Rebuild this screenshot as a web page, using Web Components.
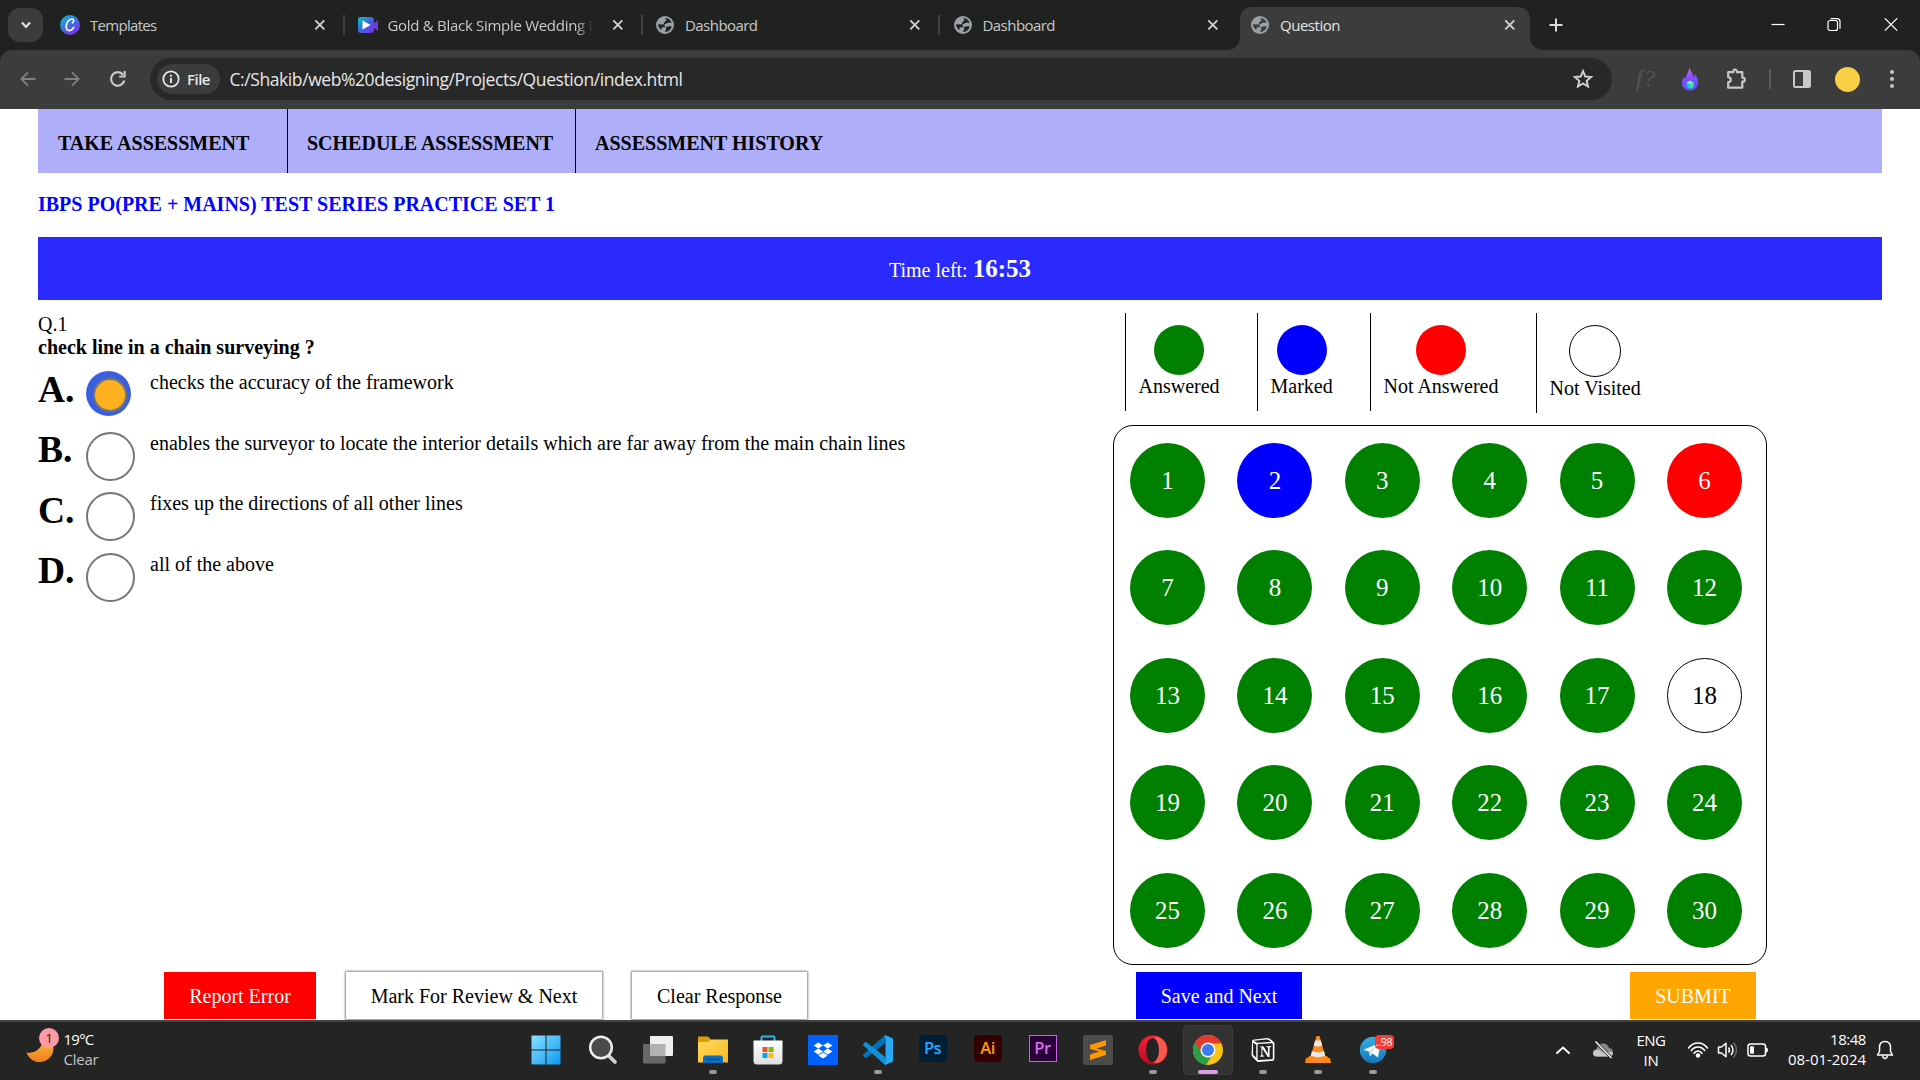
<!DOCTYPE html>
<html lang="en">
<head>
<meta charset="utf-8">
<title>Question</title>
<style>
html,body{margin:0;padding:0;width:1920px;height:1080px;overflow:hidden;background:#fff}
</style>
</head>
<body>
<question-screen></question-screen>
<script>
const define = (name, css, html, setup) => {
  const tpl = document.createElement('template');
  tpl.innerHTML = `<style>*,::before{box-sizing:border-box}:host{display:block;box-sizing:border-box}${css}</style>${html}`;
  customElements.define(name, class extends HTMLElement {
    connectedCallback() {
      if (this.shadowRoot) return;
      const root = this.attachShadow({ mode: 'open' });
      root.appendChild(tpl.content.cloneNode(true));
      if (setup) setup(this, root);
    }
  });
};

/* name: [width, height, markup] */
const ICONS = {
  down: [14, 14, '<path d="M3 4.500l4 4.400 4-4.400" fill="none" stroke="#e3e3e3" stroke-width="2.200"/>'],
  close: [12, 12, '<path d="M1.3 1.3l9 9M10.3 1.3l-9 9" stroke="#d0d0d0" stroke-width="1.9"/>'],
  canva: [20, 20, '<defs><linearGradient id="g" x1="0" y1="0" x2=".7" y2="1"><stop offset="0" stop-color="#00c4cc"/><stop offset=".5" stop-color="#3a78dc"/><stop offset="1" stop-color="#7d2ae8"/></linearGradient></defs><circle cx="10" cy="10" r="10" fill="url(#g)"/><path d="M12.500 7.800c1.500-.8 1.700-3.800-.4-3.800C8.800 4 6 8 6.200 11.800c.1 2.600 1.500 3.900 3.300 3.800 1.700-.1 3.100-1.200 4.200-3.200" fill="none" stroke="#fff" stroke-width="1.600" stroke-linecap="round"/>'],
  video: [20, 18, '<defs><linearGradient id="g" x1="0" y1="0" x2="1" y2="1"><stop offset="0" stop-color="#00c4cc"/><stop offset=".5" stop-color="#4066e0"/><stop offset="1" stop-color="#7d2ae8"/></linearGradient></defs><rect x="0" y="1" width="16" height="16" rx="3" fill="url(#g)"/><path d="M15 8l5-4v11l-5-4z" fill="#6a3be4"/><path d="M4.500 4.500v9l8-4.500z" fill="#fff"/>'],
  globe: [18, 18, '<circle cx="9" cy="9" r="9" fill="#9aa0a6"/><path d="M8.500 2C11 3 11 4.500 9 5.500 7.500 6.200 9 7.700 7 8.500L2 8.300c.1 2.500 1.500 4.500 3.500 5.700V11.500l4-.5c-1-1.500-2-2 0-3 2-.8 2.500-2.500 6-1C15 4 12 1.800 8.500 2zM9.500 11.500c1.500-1 4.500-1.500 6.300-1.200C15 13.500 12.500 15.800 9.500 16c-1-1.500 2-2.500 0-4.500z" fill="var(--hole,#202221)"/>'],
  plus: [14, 14, '<path d="M7 .5v13M.5 7h13" stroke="#dadada" stroke-width="2"/>'],
  min: [14, 14, '<path d="M.5 6.500h13" stroke="#fff" stroke-width="1.200"/>'],
  restore: [14, 14, '<rect x="1" y="2.500" width="9.500" height="10" rx="2" fill="none" stroke="#fff" stroke-width="1.200"/><path d="M3.500.7h6.500q3 0 3 3v7" fill="none" stroke="#fff" stroke-width="1.200"/>'],
  x: [14, 14, '<path d="M.8.3l12.400 12.400M13.200.3L.8 12.700" stroke="#fff" stroke-width="1.200"/>'],
  back: [16, 16, '<path d="M15.500 8H1.500M8 1.300L1.300 8 8 14.700" fill="none" stroke="#808080" stroke-width="1.900"/>'],
  fwd: [16, 16, '<path d="M.5 8h14M8 1.300L14.700 8 8 14.700" fill="none" stroke="#808080" stroke-width="1.900"/>'],
  reload: [18, 18, '<path d="M15.300 10.500A6.700 6.700 0 1 1 14 4.700" fill="none" stroke="#c9c9c9" stroke-width="2.200"/><path d="M16.700 1v6.500h-6.500V5.500h4.300V1z" fill="#c9c9c9"/>'],
  info: [18, 18, '<circle cx="9" cy="9" r="7.700" fill="none" stroke="#e6e6e6" stroke-width="1.800"/><path d="M9 8v5M9 4.800v2" stroke="#e6e6e6" stroke-width="1.900"/>'],
  star: [22, 22, '<path d="M11 3.200l2.300 5.300 5.800.5-4.400 3.800 1.300 5.700-5-3-5 3 1.300-5.700L2.900 9l5.800-.5z" fill="none" stroke="#cfcfcf" stroke-width="2"/>'],
  flame: [18, 24, '<defs><linearGradient id="g" x1="0" y1="0" x2=".2" y2="1"><stop offset="0" stop-color="#e36bfb"/><stop offset=".5" stop-color="#8a4dff"/><stop offset="1" stop-color="#5a50ff"/></linearGradient></defs><path d="M8.500.5c.6 3.800 3.500 5.700 4.100 9.700.9-.8 1.200-2 1.200-3.300 2.200 2.500 3.300 5.600 3.100 8.800-.2 4.500-3.400 7.800-8 7.800S.8 20.300.9 16c.1-3 1.300-4.500 2-6.500.4 1.200.7 2 1.300 2.500C5 8.500 7.700 5.500 8.500.5z" fill="url(#g)"/><path d="M9 13.500l3.500 2v4.500l-3.500 2-3.500-2v-4.500z" fill="#22bdf0"/><path d="M9 13.500l3.500 2-3.500 2-3.500-2z" fill="#6ff2b0"/><path d="M9 17.500l3.500-2v4.500l-3.500 2z" fill="#3be0a0"/>'],
  puzzle: [22, 22, '<path d="M3.200 4.200h5q-.3-2.500 1.800-2.500t1.800 2.500h5.500v5.500q2.500-.2 2.500 2t-2.500 2v6H3.200v-5.500q2.600-.3 2.600-2.500t-2.600-2.500z" fill="none" stroke="#c8c8c8" stroke-width="2.200" stroke-linejoin="round"/>'],
  panel: [20, 20, '<rect x="2" y="2" width="16" height="16" rx="1.500" fill="none" stroke="#c8c8c8" stroke-width="2"/><rect x="11" y="2" width="7" height="16" fill="#c8c8c8"/>'],
  dots: [6, 20, '<circle cx="3" cy="3" r="2" fill="#c8c8c8"/><circle cx="3" cy="10" r="2" fill="#c8c8c8"/><circle cx="3" cy="17" r="2" fill="#c8c8c8"/>'],
  moon: [28, 22, '<defs><linearGradient id="g" x1="0" y1="0" x2="0" y2="1"><stop offset="0" stop-color="#f9b93a"/><stop offset="1" stop-color="#f07c1d"/></linearGradient></defs><path d="M.5 11.500Q12 13.500 17 1L26 0Q30 11 23 17.500 17 22.500 9 20.500 3 18 .5 11.500z" fill="url(#g)"/>'],
  win: [30, 30, '<defs><linearGradient id="g" gradientUnits="userSpaceOnUse" x1="0" y1="0" x2="30" y2="30"><stop offset="0" stop-color="#8be2ff"/><stop offset="1" stop-color="#0a97f5"/></linearGradient></defs><path d="M.5.5h14v14h-14zM15.500.5h14v14h-14zM.5 15.500h14v14h-14zM15.500 15.500h14v14h-14z" fill="url(#g)"/>'],
  search: [30, 30, '<path d="M20 20l7 7" stroke="#cfd3d8" stroke-width="3.800" stroke-linecap="round"/><circle cx="13" cy="12.500" r="10.800" fill="#4b4b4d" stroke="#ececec" stroke-width="2.500"/>'],
  tasks: [30, 30, '<rect x="0" y="9" width="22.500" height="19.500" rx="1" fill="#686868"/><rect x="7" y="1" width="23" height="20" rx="1" fill="#efefef"/><path d="M7 9h15.500v12H8q-1 0-1-1z" fill="#b2b2b2"/>'],
  folder: [30, 30, '<defs><linearGradient id="g" x1="0" y1="0" x2="1" y2="1"><stop offset="0" stop-color="#ffd95e"/><stop offset="1" stop-color="#f9b920"/></linearGradient></defs><path d="M0 2.500Q0 1.500 1 1.500h9l3 3v6H0z" fill="#e19c05"/><path d="M0 7h10l3-2.500h17v23H0z" fill="url(#g)"/><path d="M5 28v-5q0-2.500 2.500-2.500h15q2.500 0 2.500 2.500v5z" fill="#0f6cbd"/><path d="M8 24.300h14" stroke="#0a4c87" stroke-width="1.200"/>'],
  store: [30, 30, '<defs><linearGradient id="g" x1="0" y1="0" x2="0" y2="1"><stop offset="0" stop-color="#fff"/><stop offset="1" stop-color="#dedede"/></linearGradient></defs><path d="M8.500 7V2.500Q8.500 1.500 9.500 1.500h11q1 0 1 1V7" fill="none" stroke="#2cb5e8" stroke-width="2"/><path d="M.5 5.500h29V26q0 3.500-3.500 3.500H4Q.5 29.500.5 26z" fill="url(#g)"/><path d="M9.500 12h5v5h-5z" fill="#f25022"/><path d="M15.500 12h5v5h-5z" fill="#7fba00"/><path d="M9.500 18h5v5h-5z" fill="#00a4ef"/><path d="M15.500 18h5v5h-5z" fill="#ffb900"/>'],
  dropbox: [30, 30, '<path d="M0 0h30v30H0z" fill="#0061fe"/><path d="M10.300 7.500l4.700 3-4.700 3-4.700-3zM19.700 7.500l4.700 3-4.700 3-4.700-3zM10.300 13.500l4.700 3-4.700 3-4.700-3zM19.700 13.500l4.700 3-4.700 3-4.700-3zM15 17.500l4.700 3-4.700 3-4.700-3z" fill="#fff"/>'],
  code: [30, 30, '<path d="M22 0v8.300L3.500 22.800q-1 .5-1.700-.2L.4 21q-.7-1 .2-1.800z" fill="#0072ba"/><path d="M22 30v-8.300L3.500 7.200q-1-.5-1.700.2L.4 9q-.7 1 .2 1.800z" fill="#1190d6"/><path d="M22 0l.5 8.500V21.500L22 30l8-3.500v-23z" fill="#2aa9f3"/>'],
  subl: [30, 30, '<rect width="30" height="30" rx="2" fill="#4b4b4b"/><path d="M7 10l16-5v5.500L13.500 13.500 23 16v4L7 25v-5.500l9.500-3L7 14z" fill="#ff9800"/>'],
  opera: [30, 30, '<defs><linearGradient id="g" x1="0" y1="0" x2="0" y2="1"><stop offset="0" stop-color="#ff2037"/><stop offset="1" stop-color="#b30d1c"/></linearGradient></defs><path d="M15 .500a14.300 14.300 0 1 0 0 29 14.300 14.300 0 0 0 0-29z" fill="url(#g)"/><path d="M15 3c4-2 7-1 9.500 1.500a14.200 14.200 0 0 1 0 21C22 28 18 29 15 27c5-2 6-22 0-24z" fill="#f9574f"/><ellipse cx="14.500" cy="15" rx="6.500" ry="12" fill="#232323"/>'],
  chrome: [30, 30, '<circle cx="15" cy="15" r="15" fill="#fbc116"/><path d="M15 15L2 7.500a15 15 0 0 0 11 22.400l7-11z" fill="#2b9e47"/><path d="M2 7.500L8.500 18.500 15 8.500h13.500A15 15 0 0 0 2 7.500z" fill="#e23b2e"/><circle cx="15" cy="15" r="7.500" fill="#fff"/><circle cx="15" cy="15" r="6" fill="#3a7cf0"/>'],
  notion: [30, 30, '<g transform="translate(1.500 1.200) scale(.9)"><path d="M3.500 4.500L20 2.500q1.500 0 3 1.200l3.200 2.500q1 .8 1 2V25q0 1.700-1.500 1.900L10 28q-1.500.1-2.500-1L3.500 22.500q-.7-1-.7-2z" fill="#fff" stroke="#fff" stroke-width="1"/><path d="M4.500 5l15-1.300q1.300 0 2.200.7l2.500 1.800L9.500 7.300q-1 .1-2-.7zM4 7l3.500 2.500v14.500L4 20.500zM9 9.800q0-1 1-1.100L25 7.800q.9 0 .9 1V24.500q0 .9-1 1L10 26.500q-1 0-1-1z" fill="#222"/><path d="M11.500 11.500l4-.3 5 8.300v-7l-1.800-.4v-.9l5.300-.3v.9l-1.700.7v10.500l-2 .2-6-9.500v7.500l2 .4v.9l-4.800.3v-.9l1.700-.8v-8.700l-1.700-.2z" fill="#fff"/></g>'],
  vlc: [30, 30, '<path d="M6 21h18l1 2h2l1 5H2l1-5h2z" fill="#f98a15"/><path d="M13.500 1h3L23 24q-8 3.500-16 0z" fill="#ff8a1c"/><path d="M12.200 5.500h5.600l1.500 5q-4.300 1.800-8.600 0zM9 16q6 2.500 12 0l1.300 4.800q-7.300 2.800-14.600 0z" fill="#e9e9e9"/>'],
  tg: [30, 30, '<defs><linearGradient id="g" x1="0" y1="0" x2="0" y2="1"><stop offset="0" stop-color="#37aee2"/><stop offset="1" stop-color="#1477b8"/></linearGradient></defs><circle cx="15" cy="15" r="13.200" fill="url(#g)"/><path d="M5.500 14.800L22.500 7.500 20 22.500l-5.500-4-2.500 2.700-.8-4.500z" fill="#fff"/><path d="M11.200 16.700l8-6-6.200 7-1 3.500z" fill="#b9d8ea"/>'],
  up: [16, 10, '<path d="M2 8l6-5.500L14 8" fill="none" stroke="#fff" stroke-width="2" stroke-linecap="round"/>'],
  cloud: [22, 18, '<path d="M5 15.500q-4 0-4-3.500 0-3 3.500-3.800Q6 2.500 11 2.500q4.500 0 6 4.500 4 .5 4 4.500t-4 4z" fill="#8a8a8a"/><path d="M1 12q1-4 5-3.500 3 .5 4.500 3 4-1.500 10.500 0 0 4-4 4H5q-4 0-4-3.500z" fill="#c8c8c8"/><path d="M3.500.5L19 16.500" stroke="#232323" stroke-width="3"/><path d="M3.500.5L19.500 17" stroke="#fff" stroke-width="1.400"/>'],
  wifi: [22, 18, '<g fill="none" stroke="#fff" stroke-width="1.700"><path d="M1.200 7.500Q5 2 11 2t9.800 5.500M4 10q2.700-4 7-4t7 4M6.700 12.700Q8.500 10 11 10t4.300 2.700"/></g><circle cx="11" cy="14.500" r="2.200" fill="#fff"/>'],
  sound: [22, 18, '<path d="M1.500 6h3L9 2.200v13.600L4.500 12h-3z" fill="none" stroke="#fff" stroke-width="1.500" stroke-linejoin="round"/><path d="M11.500 6.500q2 2.500 0 5M14 4q4 5 0 10" fill="none" stroke="#fff" stroke-width="1.500"/><path d="M16.500 1.500q6 7.500 0 15" fill="none" stroke="#6b6b6b" stroke-width="1.500"/>'],
  battery: [22, 16, '<rect x="1" y="2" width="17.500" height="12" rx="2.500" fill="none" stroke="#fff" stroke-width="1.500"/><rect x="3" y="4.200" width="4" height="7.600" rx="1" fill="#fff"/><path d="M19 5.500q2 0 2 2.500t-2 2.500z" fill="#fff"/>'],
  bell: [18, 20, '<path d="M9 1.500q5.500 0 5.500 6v4l2 3.500h-15l2-3.500v-4q0-6 5.500-6z" fill="none" stroke="#fff" stroke-width="1.500" stroke-linejoin="round"/><path d="M6.500 15.500q.5 3 2.500 3t2.500-3" fill="none" stroke="#fff" stroke-width="1.500"/>'],
};
define('ui-icon', ':host{flex:none;line-height:0}', '', (el, root) => {
  const [w, h, body] = ICONS[el.getAttribute('name')];
  root.innerHTML += `<svg width="${w}" height="${h}" viewBox="0 0 ${w} ${h}">${body}</svg>`;
});

/* A single line of text whose tracking is set so that it spans w pixels. */
define('fit-text', ':host{white-space:nowrap;flex:none}span{display:inline-block}', '<span><slot></slot></span>', (el, root) => {
  const span = root.querySelector('span'), n = el.textContent.length;
  const natural = span.getBoundingClientRect().width, want = +el.getAttribute('w');
  span.style.letterSpacing = ((want - natural) / n).toFixed(3) + 'px';
});

define('browser-tab', `
:host{width:297.5px;height:50px;flex:none;display:flex;align-items:center;padding:0 0 0 10px;color:#c7c9c8;font:15px/20px "Open Sans",sans-serif}
:host([active]){--hole:#3c3c3c;color:#e3e3e3;width:290px;height:43px;margin-top:7px;background:#3c3c3c;border-radius:12px 12px 0 0;padding-bottom:7px}
.f{width:20px;flex:none}:host([icon=globe]) .f{padding-left:1px}.t{width:206px;flex:none;margin-left:10px;overflow:hidden}
:host([fade]) .t{-webkit-mask-image:linear-gradient(90deg,#000 188px,transparent 206px);mask-image:linear-gradient(90deg,#000 188px,transparent 206px)}
ui-icon.c{margin-left:18px}.s{width:2px;height:20px;background:#3f4140;margin-left:17px}:host([active]) .s,:host([last]) .s{display:none}`,
  '<div class="f"></div><div class="t"><slot></slot></div><ui-icon class="c" name="close"></ui-icon><div class="s"></div>',
  (el, root) => root.querySelector('.f').innerHTML = `<ui-icon name="${el.getAttribute('icon')}"></ui-icon>`);

define('tab-strip', `
:host{height:50px;background:#202221;display:flex;align-items:center}
.menu{width:35px;height:34px;margin:0 7px 0 8px;border-radius:12px;background:#3c3c3c;display:flex;align-items:center;justify-content:center}
.flare{width:12px;height:12px;align-self:flex-end;flex:none;background:radial-gradient(circle at 0 0,transparent 11.500px,#3c3c3c 12px)}
.flare.l{margin-left:-12px}.flare.r{background:radial-gradient(circle at 100% 0,transparent 11.500px,#3c3c3c 12px)}
.plus{margin-left:6.500px}.min{margin-left:208px}.rest{margin-left:42px}.x{margin-left:43.500px}`, `
<div class="menu"><ui-icon name="down"></ui-icon></div>
<browser-tab icon="canva"><fit-text w="66.5">Templates</fit-text></browser-tab>
<browser-tab icon="video" fade><fit-text w="221">Gold &amp; Black Simple Wedding Inv</fit-text></browser-tab>
<browser-tab icon="globe"><fit-text w="72.5">Dashboard</fit-text></browser-tab>
<browser-tab icon="globe" last><fit-text w="72.5">Dashboard</fit-text></browser-tab>
<div class="flare l"></div><browser-tab icon="globe" active><fit-text w="60">Question</fit-text></browser-tab><div class="flare r"></div>
<ui-icon class="plus" name="plus"></ui-icon><ui-icon class="min" name="min"></ui-icon><ui-icon class="rest" name="restore"></ui-icon><ui-icon class="x" name="x"></ui-icon>`);

define('address-bar', `
:host{height:59px;background:#202221;font-family:"Open Sans",sans-serif}
.bar{height:59px;background:#3c3c3c;border-radius:12px 12px 0 0;display:flex;align-items:center;padding:0 0 1px 20px}
.n1{margin-left:28px}.n2{margin-left:28.500px}
.omni{width:1462px;height:42px;margin-left:23.500px;border-radius:21px;background:#282828;display:flex;align-items:center;padding:0 18.500px 0 7px;flex:none}
.chip{width:63px;height:30px;border-radius:15px;background:#3c3c3c;display:flex;align-items:center;padding-left:5px;gap:7px;color:#e6e6e6;font-size:15px;font-weight:600}
.url{margin-left:9.500px;font-size:17.500px;line-height:24px;color:#e6e6e6;flex:1}
.fx{margin-left:24px;font:italic 23px/26px "Liberation Serif",serif;color:#555;width:21px;letter-spacing:1px}
.fl{margin-left:24px}.pz{margin-left:26px}.sep{width:2px;height:20px;background:#5a5a5a;margin-left:21.500px}.pn{margin-left:21.500px}
.me{width:25px;height:25px;border-radius:50%;background:#f9cf45;margin-left:23px}.dt{margin-left:29px}`, `
<div class="bar"><ui-icon name="back"></ui-icon><ui-icon class="n1" name="fwd"></ui-icon><ui-icon class="n2" name="reload"></ui-icon>
<div class="omni"><div class="chip"><ui-icon name="info"></ui-icon><fit-text w="23">File</fit-text></div>
<div class="url"><fit-text w="453">C:/Shakib/web%20designing/Projects/Question/index.html</fit-text></div><ui-icon name="star"></ui-icon></div>
<div class="fx">f?</div><ui-icon class="fl" name="flame"></ui-icon><ui-icon class="pz" name="puzzle"></ui-icon><div class="sep"></div><ui-icon class="pn" name="panel"></ui-icon><div class="me"></div><ui-icon class="dt" name="dots"></ui-icon></div>`);

define('site-nav', `
:host{display:flex;height:64px;background:#aeaef9;font-weight:bold}
div{border-right:1px solid #000;padding:5px 0 0 19px;display:flex;align-items:center}
.a{width:250px;padding-left:20px}.b{width:288px}.c{border:0}`,
  '<div class="a">TAKE ASSESSMENT</div><div class="b">SCHEDULE ASSESSMENT</div><div class="c">ASSESSMENT HISTORY</div>');

define('timer-bar', ':host{height:63px;background:#2a2aff;color:#fff;display:flex;align-items:center;justify-content:center;padding-top:1px}b{font-size:25px}',
  '<span>Time left: <b><slot></slot></b></span>');

define('answer-option', `
:host{display:flex;height:60.600px}
.l{width:48px;font:bold 37.500px/46px "Liberation Serif",serif;margin-top:-4.500px}
.r{width:49px;height:49px;border-radius:50%;border:2px solid #767676;margin-right:15px}
:host([checked]) .r{width:45px;height:45px;border:0;background:#3b5ee0;margin-right:19px;padding:7px 0 0 7px}
:host([checked]) .r::before{content:"";display:block;width:34px;height:34px;border-radius:50%;border:2px solid #767676;background:#ffb01f}`,
  '<div class="l"></div><div class="r"></div><div><slot></slot></div>',
  (el, root) => root.querySelector('.l').textContent = el.getAttribute('letter'));

define('legend-item', `
:host{border-left:1px solid #000;height:98px;padding:12px 0 0 13px;width:var(--w);display:flex;align-items:flex-start}
.c{display:flex;flex-direction:column;align-items:center;white-space:nowrap;margin-left:-.5px}
.d{width:50px;height:50px;border-radius:50%;background:var(--c)}
:host([open]){height:100px}:host([open]) .d{width:52px;height:52px;border:1px solid #000;margin-left:.5px}`,
  '<div class="c"><div class="d"></div><slot></slot></div>');

define('question-grid', `
:host{width:654px;height:540px;border:1px solid #000;border-radius:20px;padding:17px 0 0 16px;display:grid;grid-template-columns:repeat(6,75px);grid-auto-rows:75px;gap:32.400px}
div{border-radius:50%;background:green;color:#fff;font-size:25px;display:flex;align-items:center;justify-content:center}
.marked{background:#00f}.wrong{background:red}.open{background:#fff;color:#000;border:1px solid #000}`, '', (el, root) => {
  const state = { 2: 'marked', 6: 'wrong', 18: 'open' };
  for (let i = 1; i <= 30; i++) {
    const d = document.createElement('div');
    d.textContent = i;
    if (state[i]) d.className = state[i];
    root.appendChild(d);
  }
});

define('action-button', `
:host{height:47px;display:flex;align-items:center;justify-content:center;padding-top:2px;color:#fff;width:var(--w);background:var(--c);flex:none}
:host([plain]){color:#000;background:#fff;box-shadow:0 0 2px 1px #888}`, '<slot></slot>');

define('quiz-page', `
:host{height:911px;padding:0 38px;background:#fff;color:#000;font:20px/23px "Liberation Serif",serif;overflow:hidden}
h1{font-size:20px;line-height:24px;margin:19px 0 21px;color:#00f}
.main{display:flex;height:652px;margin-top:13px}.left{width:1075px}
.q{font-weight:bold;margin-bottom:12px}.legend{display:flex;padding-left:12px;height:112px}
.foot{display:flex;padding:7px 0 0 126px;height:55px}`, `
<site-nav></site-nav>
<h1>IBPS PO(PRE + MAINS) TEST SERIES PRACTICE SET 1</h1>
<timer-bar>16:53</timer-bar>
<div class="main"><div class="left"><div>Q.1</div><div class="q">check line in a chain surveying ?</div>
<answer-option letter="A." checked>checks the accuracy of the framework</answer-option>
<answer-option letter="B.">enables the surveyor to locate the interior details which are far away from the main chain lines</answer-option>
<answer-option letter="C.">fixes up the directions of all other lines</answer-option>
<answer-option letter="D.">all of the above</answer-option></div>
<div><div class="legend"><legend-item style="--c:green;--w:132px">Answered</legend-item><legend-item style="--c:#00f;--w:113px">Marked</legend-item><legend-item style="--c:red;--w:166px">Not Answered</legend-item><legend-item open style="--c:#fff;--w:140px">Not Visited</legend-item></div>
<question-grid></question-grid></div></div>
<div class="foot"><action-button style="--c:red;--w:152px">Report Error</action-button>
<action-button plain style="--w:256px;margin-left:30px">Mark For Review &amp; Next</action-button>
<action-button plain style="--w:175px;margin-left:30px">Clear Response</action-button>
<action-button style="--c:#00f;--w:166px;margin-left:329px">Save and Next</action-button>
<action-button style="--c:orange;--w:126px;margin-left:328px">SUBMIT</action-button></div>`);

define('task-app', `
:host{width:55px;height:58px;flex:none;display:flex;flex-direction:column;align-items:center;padding-top:3px}
.c{width:50px;height:50px;border-radius:5px;display:flex;align-items:center;justify-content:center;position:relative}
:host([active]) .c{background:#323232;box-shadow:inset 0 0 0 1px #3c3c3c}
.i{display:none;position:absolute;bottom:1px;width:8px;height:4px;border-radius:2px;background:#9a9a9a}
:host([run]) .i{display:block}:host([active]) .i{width:20px;background:#dc9ee8}
.sq{width:28px;height:27px;border-radius:4px;font:600 16.500px/25px "Open Sans",sans-serif;letter-spacing:-.5px;text-align:center;margin-top:-3px}
.bd{position:absolute;left:27px;top:10px;width:19px;height:14px;border-radius:4px;background:#f23c34;color:#fff;font:10.500px/14px "Open Sans",sans-serif;text-align:center;letter-spacing:-.3px}`,
  '<div class="c"><div class="i"></div></div>', (el, root) => {
  const c = root.querySelector('.c'), n = el.getAttribute('icon'), t = el.getAttribute('label'), b = el.getAttribute('badge');
  if (n) c.insertAdjacentHTML('afterbegin', `<ui-icon name="${n}"></ui-icon>`);
  if (t) c.insertAdjacentHTML('afterbegin', `<div class="sq" style="${el.getAttribute('look')}">${t}</div>`);
  if (b) c.insertAdjacentHTML('beforeend', `<div class="bd">${b}</div>`);
});

define('task-bar', `
:host{height:60px;background:#242424;border-top:2px solid #434343;display:flex;color:#fff;font:15px/20px "Open Sans",sans-serif}
.w{width:518px;flex:none;display:flex;padding-left:26px}
.m{width:37.500px;position:relative;padding-top:19px}.m b{position:absolute;left:13px;top:6px;width:20px;height:20px;border-radius:50%;background:#ff99a4;color:#222;text-align:center;font:13.500px/20px "Open Sans",sans-serif}
.t{padding-top:6.500px}.t .g{color:#c5c5c5}
.tray{display:flex;align-items:center;flex:1;padding:0 0 2px 155px}
.lang{width:30px;margin-left:22px;display:flex;flex-direction:column;align-items:center}
.clock{display:flex;flex-direction:column;align-items:flex-end;margin:-2px 0 0 19px;width:78px}`, `
<div class="w"><div class="m"><ui-icon name="moon"></ui-icon><b>1</b></div><div class="t"><fit-text w="30">19°C</fit-text><fit-text w="35" class="g">Clear</fit-text></div></div>
<task-app icon="win"></task-app><task-app icon="search" style="margin-left:2px"></task-app><task-app icon="tasks"></task-app><task-app icon="folder" run></task-app><task-app icon="store"></task-app><task-app icon="dropbox"></task-app><task-app icon="code" run></task-app>
<task-app label="Ps" look="background:#001e36;color:#31a8ff"></task-app><task-app label="Ai" look="background:#330000;color:#ff9a00"></task-app><task-app label="Pr" look="background:#2a0038;color:#d670f2;border:1.500px solid #c265e0;border-radius:0;line-height:23px"></task-app>
<task-app icon="subl"></task-app><task-app icon="opera" run></task-app><task-app icon="chrome" run active></task-app><task-app icon="notion" run></task-app><task-app icon="vlc" run></task-app><task-app icon="tg" run badge="..98"></task-app>
<div class="tray"><ui-icon name="up"></ui-icon><ui-icon name="cloud" style="margin-left:21px"></ui-icon><div class="lang"><fit-text w="29">ENG</fit-text><fit-text w="15">IN</fit-text></div><ui-icon name="wifi" style="margin-left:21px"></ui-icon><ui-icon name="sound" style="margin-left:8px"></ui-icon><ui-icon name="battery" style="margin-left:8px"></ui-icon><div class="clock"><fit-text w="36">18:48</fit-text><fit-text w="78">08-01-2024</fit-text></div><ui-icon name="bell" style="margin-left:10px"></ui-icon></div>`);

define('question-screen', ':host{width:1920px;height:1080px;overflow:hidden}', '<tab-strip></tab-strip><address-bar></address-bar><quiz-page></quiz-page><task-bar></task-bar>');
</script>
</body>
</html>
